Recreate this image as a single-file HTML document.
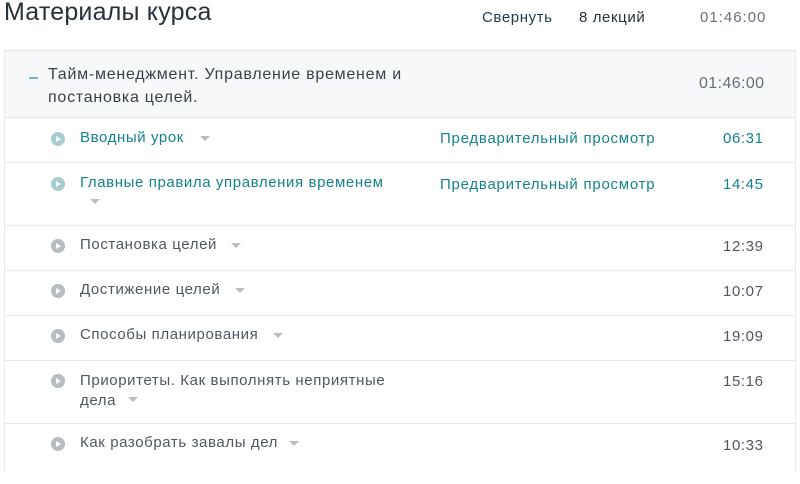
<!DOCTYPE html>
<html><head><meta charset="utf-8"><style>
body{margin:0;width:800px;height:450px;overflow:hidden;background:#fff;font-family:"Liberation Sans","DejaVu Sans",sans-serif;color:#505763;position:relative}
.a{position:absolute;white-space:nowrap;letter-spacing:0.6px}
.box{position:absolute;left:4px;top:50px;width:790px;height:420px;border:1px solid #e8e9eb;border-bottom:none}
.hd{position:absolute;left:0;top:0;width:790px;height:66px;background:#f7f8fa;border-bottom:1px solid #e8e9eb}
.row{position:absolute;left:0;width:790px;border-bottom:1px solid #e8e9eb}
.ic{position:absolute;left:46px;width:14px;height:14px;border-radius:50%;background:#b7bdc2}
.ic:after{content:"";position:absolute;left:5px;top:4px;border-left:5px solid #fff;border-top:3px solid transparent;border-bottom:3px solid transparent}
.ic.t{background:#a9ccd2}
.car{position:absolute;border-top:5px solid #b7bdc2;border-left:5px solid transparent;border-right:5px solid transparent}
.tl{color:#14838f}
</style></head><body>
<div class="a" style="left:4px;top:-2px;font-size:25px;color:#29303b;letter-spacing:0.2px">Материалы курса</div>
<div class="a" style="left:482px;top:9px;font-size:15px;color:#1c3d4d">Свернуть</div>
<div class="a" style="left:579px;top:9px;font-size:15px;color:#29303b">8 лекций</div>
<div class="a" style="left:700px;top:9px;font-size:15px;color:#686f7a;letter-spacing:1px">01:46:00</div>
<div class="box">
<div class="hd">
<div class="a" style="left:24px;top:18px;font-size:16px;color:#007791">–</div>
<div class="a" style="left:43px;top:12px;font-size:16px;line-height:23px;color:#3a404a;letter-spacing:0.75px">Тайм-менеджмент. Управление временем и<br>постановка целей.</div>
<div class="a" style="left:694px;top:24px;font-size:16px;color:#686f7a;letter-spacing:0.4px">01:46:00</div>
</div>
<div class="row" style="top:67px;height:44px"><div class="ic t" style="top:14px"></div><div class="a tl" style="left:75px;top:11px;font-size:15px">Вводный урок</div><div class="car" style="left:195px;top:18px"></div><div class="a tl" style="left:435px;top:12px;font-size:15px;letter-spacing:0.75px">Предварительный просмотр</div><div class="a tl" style="left:718px;top:12px;font-size:15px">06:31</div></div>
<div class="row" style="top:112px;height:62px"><div class="ic t" style="top:14px"></div><div class="a tl" style="left:75px;top:11px;font-size:15px">Главные правила управления временем</div><div class="car" style="left:85px;top:36px"></div><div class="a tl" style="left:435px;top:13px;font-size:15px;letter-spacing:0.75px">Предварительный просмотр</div><div class="a tl" style="left:718px;top:13px;font-size:15px">14:45</div></div>
<div class="row" style="top:175px;height:44px"><div class="ic" style="top:13px"></div><div class="a" style="left:75px;top:10px;font-size:15px">Постановка целей</div><div class="car" style="left:226px;top:17px"></div><div class="a" style="left:718px;top:12px;font-size:15px">12:39</div></div>
<div class="row" style="top:220px;height:44px"><div class="ic" style="top:13px"></div><div class="a" style="left:75px;top:10px;font-size:15px">Достижение целей</div><div class="car" style="left:230px;top:17px"></div><div class="a" style="left:718px;top:12px;font-size:15px">10:07</div></div>
<div class="row" style="top:265px;height:44px"><div class="ic" style="top:13px"></div><div class="a" style="left:75px;top:10px;font-size:15px">Способы планирования</div><div class="car" style="left:268px;top:17px"></div><div class="a" style="left:718px;top:12px;font-size:15px">19:09</div></div>
<div class="row" style="top:310px;height:62px"><div class="ic" style="top:13px"></div><div class="a" style="left:75px;top:10px;font-size:15px;line-height:20px">Приоритеты. Как выполнять неприятные<br>дела</div><div class="car" style="left:123px;top:36px"></div><div class="a" style="left:718px;top:12px;font-size:15px">15:16</div></div>
<div class="row" style="top:373px;height:60px;border:none"><div class="ic" style="top:13px"></div><div class="a" style="left:75px;top:10px;font-size:15px">Как разобрать завалы дел</div><div class="car" style="left:284px;top:17px"></div><div class="a" style="left:718px;top:13px;font-size:15px">10:33</div></div>
</div>
</body></html>
